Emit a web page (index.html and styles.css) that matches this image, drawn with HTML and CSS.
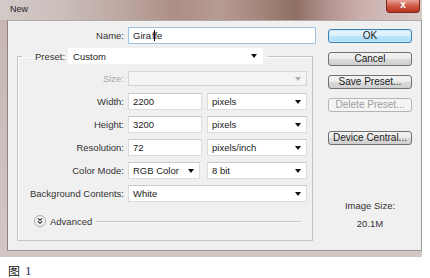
FILE: index.html
```html
<!DOCTYPE html>
<html>
<head>
    <link rel="stylesheet" href="styles.css">
</head>
<body>
    <div class="window">
        <div class="titlebar">
            <span class="title">New</span>
            <span class="close-button">x</span>
        </div>
        <div class="frame">
            <div class="client">
                <div class="form-area">
                    <div class="name-row">
                        <label class="field-label">Name:</label>
                        <div class="textbox focused">Gira<span class="ibeam"></span>ffe</div>
                    </div>

                    <fieldset class="preset-group">
                        <legend class="preset-legend">
                            <label class="preset-label">Preset:</label>
                            <div class="select preset-select"><span>Custom</span><span class="arrow"></span></div>
                        </legend>

                        <div class="field-grid">
                            <label class="field-label disabled">Size:</label>
                            <div class="select wide disabled"><span></span><span class="arrow"></span></div>

                            <label class="field-label">Width:</label>
                            <div class="pair">
                                <div class="textbox num">2200</div>
                                <div class="select unit"><span>pixels</span><span class="arrow"></span></div>
                            </div>

                            <label class="field-label">Height:</label>
                            <div class="pair">
                                <div class="textbox num">3200</div>
                                <div class="select unit"><span>pixels</span><span class="arrow"></span></div>
                            </div>

                            <label class="field-label">Resolution:</label>
                            <div class="pair">
                                <div class="textbox num">72</div>
                                <div class="select unit"><span>pixels/inch</span><span class="arrow"></span></div>
                            </div>

                            <label class="field-label">Color Mode:</label>
                            <div class="pair">
                                <div class="select mode"><span>RGB Color</span><span class="arrow"></span></div>
                                <div class="select unit"><span>8 bit</span><span class="arrow"></span></div>
                            </div>

                            <label class="field-label">Background Contents:</label>
                            <div class="select wide"><span>White</span><span class="arrow"></span></div>
                        </div>

                        <div class="advanced-row">
                            <span class="advanced-icon">
                                <svg width="12" height="12" viewBox="0 0 12 12">
                                    <circle cx="6" cy="6" r="5.5" fill="#f4f4f4" stroke="#a9a9a9"/>
                                    <polyline points="3.8,3.4 6,5.3 8.2,3.4" fill="none" stroke="#333" stroke-width="1.2"/>
                                    <polyline points="3.8,6.4 6,8.3 8.2,6.4" fill="none" stroke="#333" stroke-width="1.2"/>
                                </svg>
                            </span>
                            <span class="advanced-text">Advanced</span>
                            <span class="advanced-line"></span>
                        </div>
                    </fieldset>
                </div>

                <div class="button-column">
                    <button class="dlg-button default">OK</button>
                    <button class="dlg-button">Cancel</button>
                    <button class="dlg-button">Save Preset...</button>
                    <button class="dlg-button" disabled>Delete Preset...</button>
                    <button class="dlg-button device">Device Central...</button>

                    <div class="image-size">
                        <div>Image Size:</div>
                        <div class="size-value">20.1M</div>
                    </div>
                </div>
            </div>
        </div>
    </div>

    <div class="caption"><span class="caption-cjk">图</span><span class="caption-num">1</span></div>
</body>
</html>
```

FILE: styles.css
```css
body {
    margin: 0;
    background-color: #FFFFFF;
    font-family: "Liberation Sans", Arial, sans-serif;
    font-size: 9.5px;
    color: #333;
}

.window {
    width: 422px;
}

.titlebar {
    height: 20px;
    display: flex;
    justify-content: space-between;
    align-items: flex-start;
    padding: 0 2px 0 10px;
    background: linear-gradient(90deg, #d3cac8 0%, #cbbfbc 14%, #bca59f 30%, #ab8e85 42%, #b79c93 52%, #a3857a 62%, #8f6f64 70%, #b39490 78%, #cbb0ad 86%, #d8cac8 100%);
}

.title {
    margin-top: 4px;
    font-size: 9px;
    color: #1e1e1e;
}

.close-button {
    width: 34px;
    height: 13px;
    box-sizing: border-box;
    border: 1px solid #7a2a1e;
    border-top: none;
    border-radius: 0 0 4px 4px;
    background: linear-gradient(#e7a596, #cf5a45 50%, #b8341f);
    color: #fff;
    font-weight: bold;
    font-size: 10px;
    line-height: 10px;
    text-align: center;
}

.frame {
    padding: 0 0 6px 7px;
    background: linear-gradient(#c7b6b4, #d2c7c5);
}

.client {
    display: flex;
    background-color: #f0f0f0;
    border-top: 1px solid #b3a9a8;
    border-left: 1px solid #8d8383;
    border-right: 1px solid #9a9a9a;
    border-bottom: 1px solid #9a9a9a;
    height: 229px;
}

.form-area {
    width: 299px;
    padding: 6px 0 0 9px;
}

.name-row {
    display: flex;
    align-items: center;
    gap: 4px;
}

.name-row .field-label {
    width: 107px;
}

.field-label {
    text-align: right;
    white-space: nowrap;
}

.field-label.disabled {
    color: #a8a8a8;
}

.textbox {
    height: 17px;
    box-sizing: border-box;
    background-color: #fff;
    border: 1px solid #dcdcdc;
    border-top-color: #c9c9c9;
    padding-left: 4px;
    line-height: 15px;
    color: #1a1a1a;
}

.textbox.focused {
    width: 188px;
    border-color: #9cc3e6;
}

.ibeam {
    display: inline-block;
    width: 0;
    height: 11px;
    border-left: 1px solid #111;
    vertical-align: -2px;
    margin-left: 3px;
    margin-right: -3px;
}

.preset-group {
    margin: 4px 0 0 0;
    padding: 0 0 13px 0;
    width: 296px;
    box-sizing: border-box;
    border: 1px solid #c4c4c4;
    box-shadow: inset 1px 1px 0 #fbfbfb;
}

.preset-legend {
    display: flex;
    align-items: center;
    gap: 3px;
    margin-left: 4px;
    padding: 0 5px 0 13px;
}

.select {
    height: 16px;
    box-sizing: border-box;
    display: flex;
    align-items: center;
    justify-content: space-between;
    background-color: #fff;
    border: 1px solid #dcdcdc;
    border-top-color: #cacaca;
    padding: 0 5px 0 4px;
    color: #1a1a1a;
}

.preset-select {
    width: 195px;
    border-color: #fff;
}

.arrow {
    width: 0;
    height: 0;
    border-left: 3px solid transparent;
    border-right: 3px solid transparent;
    border-top: 4px solid #111;
}

.select.disabled {
    background-color: #f4f4f4;
    border-color: #d5d5d5;
}

.select.disabled .arrow {
    border-top-color: #b0b0b0;
}

.field-grid {
    display: grid;
    grid-template-columns: 106px 179px;
    grid-auto-rows: 17px;
    column-gap: 4px;
    row-gap: 6px;
    align-items: center;
    margin-top: 6px;
}

.field-grid .select {
    height: 17px;
}

.field-grid .select.disabled {
    height: 15px;
}

.pair {
    display: flex;
    justify-content: space-between;
    height: 17px;
}

.textbox.num {
    width: 74px;
}

.select.unit {
    width: 100px;
}

.select.mode {
    width: 72px;
}

.advanced-row {
    display: flex;
    align-items: center;
    gap: 4px;
    height: 12px;
    margin-top: 13px;
    padding: 0 11px 0 16px;
}

.advanced-icon {
    display: flex;
}

.advanced-line {
    flex: 1;
    height: 1px;
    background-color: #c6c6c6;
    box-shadow: 0 1px 0 #fbfbfb;
}

.button-column {
    width: 84px;
    margin-left: 12px;
    padding-top: 8px;
    display: flex;
    flex-direction: column;
    align-items: stretch;
}

.dlg-button {
    height: 14px;
    margin: 0 0 9px 0;
    padding: 0;
    box-sizing: border-box;
    border: 1px solid #707070;
    border-radius: 3px;
    background: linear-gradient(#f3f3f3, #ebebeb 50%, #dbdbdb 51%, #cfcfcf);
    font-family: "Liberation Sans", Arial, sans-serif;
    font-size: 10px;
    line-height: 12px;
    color: #1a1a1a;
}

.dlg-button.default {
    border-color: #3c7fb1;
    background: linear-gradient(#eaf6fd, #d9f0fc 50%, #bee6fd 51%, #a7d9f5);
    box-shadow: inset 0 0 0 1px #c9e8f9;
}

.dlg-button:disabled {
    border-color: #b5b5b5;
    background: #f4f4f4;
    color: #9d9d9d;
}

.dlg-button.device {
    margin-top: 10px;
}

.image-size {
    margin-top: 43px;
    text-align: center;
    line-height: 18px;
    color: #333;
}

.caption {
    display: flex;
    align-items: center;
    gap: 5px;
    margin: 5px 0 0 8px;
}

.caption-cjk {
    font-family: "Noto Sans CJK SC", sans-serif;
    font-size: 12px;
    color: #111;
}

.caption-num {
    font-family: "Liberation Serif", serif;
    font-size: 13px;
    color: #1c2a5c;
}
```
